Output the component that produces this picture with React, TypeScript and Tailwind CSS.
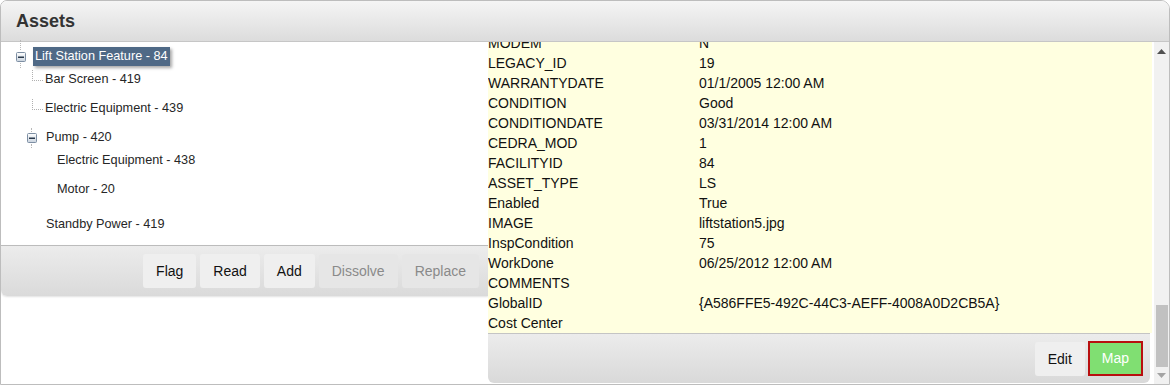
import React from 'react';

const rows: [string, string][] = [
  ['MODEM', 'N'],
  ['LEGACY_ID', '19'],
  ['WARRANTYDATE', '01/1/2005 12:00 AM'],
  ['CONDITION', 'Good'],
  ['CONDITIONDATE', '03/31/2014 12:00 AM'],
  ['CEDRA_MOD', '1'],
  ['FACILITYID', '84'],
  ['ASSET_TYPE', 'LS'],
  ['Enabled', 'True'],
  ['IMAGE', 'liftstation5.jpg'],
  ['InspCondition', '75'],
  ['WorkDone', '06/25/2012 12:00 AM'],
  ['COMMENTS', ''],
  ['GlobalID', '{A586FFE5-492C-44C3-AEFF-4008A0D2CB5A}'],
  ['Cost Center', ''],
];

function MinusBox() {
  return (
    <svg width="10" height="10" viewBox="0 0 10 10" className="block">
      <defs>
        <linearGradient id="mb" x1="0" y1="0" x2="0" y2="1">
          <stop offset="0" stopColor="#ffffff" />
          <stop offset="1" stopColor="#c9d3de" />
        </linearGradient>
      </defs>
      <rect x="0.5" y="0.5" width="9" height="9" rx="1" fill="url(#mb)" stroke="#7d8ea3" />
      <rect x="2" y="4.5" width="6" height="1.5" fill="#2b3a4c" />
    </svg>
  );
}

function Branch() {
  return (
    <div className="w-[11px] h-[11px] border-l border-b border-dotted border-[#b0b0b0] mt-[-10px]" />
  );
}

function ToolButton({ label, disabled }: { label: string; disabled?: boolean }) {
  return (
    <button
      className={
        disabled
          ? 'h-[34px] px-[13px] rounded-[3px] bg-[#e6e6e6] text-[#8a8a8a] text-[14px]'
          : 'h-[34px] px-[13px] rounded-[3px] bg-[#efefef] text-[#111] text-[14px]'
      }
    >
      {label}
    </button>
  );
}

export default function App() {
  return (
    <div className="w-[1170px] h-[386px] bg-white font-['Liberation_Sans',Arial,sans-serif] text-[14px]">
      <div className="h-[385px] border border-[#bdbdbd] rounded-t-[7px] rounded-tr-[9px] flex flex-col overflow-hidden">
        <div className="h-[41px] shrink-0 bg-gradient-to-b from-[#f5f5f5] to-[#dcdcdc] border-b border-[#c6c6c6] flex items-center px-[15px]">
          <span className="text-[18px] font-bold text-[#333]">Assets</span>
        </div>

        <div className="flex flex-1 min-h-0">
          {/* left tree panel */}
          <div className="w-[487px] shrink-0 flex flex-col">
            <div className="h-[203px] text-[12.7px] text-[#262626] relative">
              <div className="flex items-center h-[19px] mt-[5px] pl-[15px]">
                <div className="relative">
                  <div className="absolute left-[4px] top-[-12px] h-[10px] border-l border-dotted border-[#b8b8b8]" />
                  <MinusBox />
                  <div className="absolute left-[4px] top-[11px] h-[5px] border-l border-dotted border-[#b8b8b8]" />
                </div>
                <span className="ml-[7px] px-[2px] h-[19px] leading-[19px] bg-[#4f6986] text-white shadow-[2px_2px_3px_rgba(0,0,0,0.35)]">
                  Lift Station Feature - 84
                </span>
              </div>
              <div className="flex items-center h-[28px] pl-[31px]">
                <Branch />
                <span className="ml-[2px]">Bar Screen - 419</span>
              </div>
              <div className="flex items-center h-[30px] pl-[31px]">
                <Branch />
                <span className="ml-[2px]">Electric Equipment - 439</span>
              </div>
              <div className="flex items-center h-[28px] pl-[26px]">
                <div className="relative">
                  <div className="absolute left-[4px] top-[-5px] h-[4px] border-l border-dotted border-[#b8b8b8]" />
                  <MinusBox />
                  <div className="absolute left-[4px] top-[11px] h-[4px] border-l border-dotted border-[#b8b8b8]" />
                </div>
                <span className="ml-[9px]">Pump - 420</span>
              </div>
              <div className="flex items-center h-[18px] pl-[56px]">
                <span>Electric Equipment - 438</span>
              </div>
              <div className="flex items-center h-[40px] pl-[56px]">
                <span>Motor - 20</span>
              </div>
              <div className="flex items-center h-[30px] pl-[45px]">
                <span>Standby Power - 419</span>
              </div>
            </div>
            <div className="h-[51px] border-t border-[#bcbcbc] bg-gradient-to-b from-[#ececec] to-[#dadada] rounded-bl-[6px] shadow-[0_1px_2px_rgba(0,0,0,0.12)] flex items-start justify-end gap-[4px] pr-[9px] pt-[8px]">
              <ToolButton label="Flag" />
              <ToolButton label="Read" />
              <ToolButton label="Add" />
              <ToolButton label="Dissolve" disabled />
              <ToolButton label="Replace" disabled />
            </div>
          </div>

          {/* right attribute panel */}
          <div className="flex-1 flex flex-col min-w-0 pb-[1px]">
            <div className="flex-1 bg-[#ffffe0] overflow-hidden mr-[2px]">
              <div className="mt-[-9px]">
                {rows.map(([k, v]) => (
                  <div key={k} className="flex h-[20px] leading-[20px] text-[#111]">
                    <div className="w-[211px] shrink-0">{k}</div>
                    <div>{v}</div>
                  </div>
                ))}
              </div>
            </div>
            <div className="h-[50px] shrink-0 mr-[4px] border-t border-[#c4c4c4] bg-gradient-to-b from-[#ececec] to-[#d9d9d9] rounded-b-[6px] flex items-start justify-end gap-[3px] pr-[7px] pt-[8px]">
              <button className="h-[34px] px-[13px] rounded-[3px] bg-[#efefef] text-[#111]">Edit</button>
              <button className="h-[35px] px-[12px] mt-[-1px] border-2 border-[#b80f0f] bg-[#80df72] text-white">Map</button>
            </div>
          </div>

          {/* scrollbar */}
          <div className="w-[15px] shrink-0 bg-[#f1f1f1] flex flex-col items-center">
            <div className="h-[17px] flex items-center justify-center mt-[1px]">
              <svg width="9" height="5" viewBox="0 0 9 5"><path d="M0 5 L4.5 0 L9 5 Z" fill="#505050" /></svg>
            </div>
            <div className="flex-1" />
            <div className="w-[12px] h-[62px] bg-[#c1c1c1]" />
            <div className="h-[17px] flex items-center justify-center">
              <svg width="9" height="5" viewBox="0 0 9 5"><path d="M0 0 L9 0 L4.5 5 Z" fill="#a3a3a3" /></svg>
            </div>
          </div>
        </div>
      </div>
    </div>
  );
}
